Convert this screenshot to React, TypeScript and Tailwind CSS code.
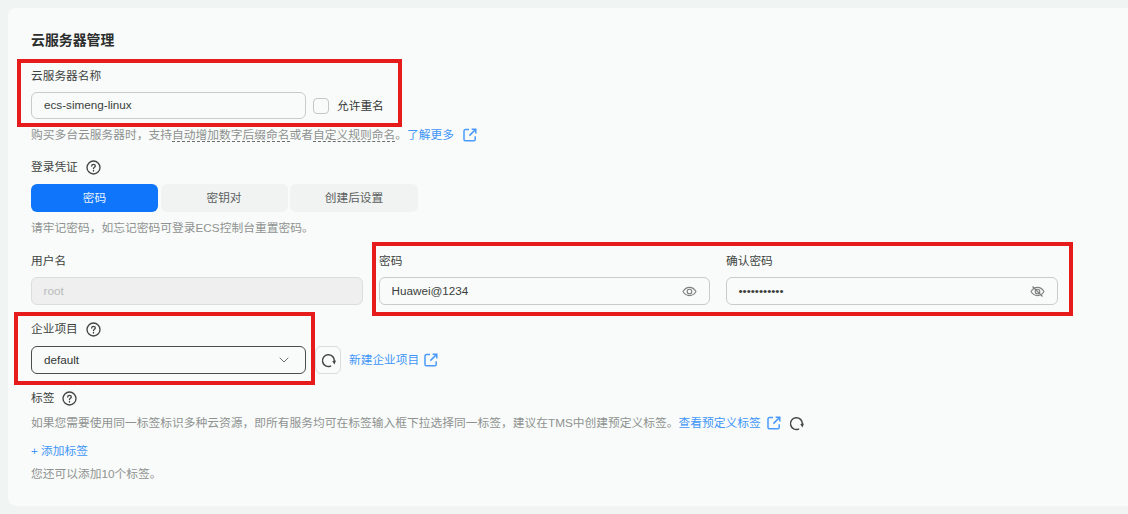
import { ChevronDown } from "lucide-react";

const cjk = "font-['Liberation_Sans','Noto_Sans_CJK_SC',sans-serif]";

function Help() {
  return (
    <svg width={15} height={15} viewBox="0 0 15 15" fill="none" stroke="#434746" strokeWidth={1.35} className="shrink-0">
      <circle cx={7.5} cy={7.5} r={6.5} />
      <path d="M5.7 6c0-1.1.8-1.7 1.8-1.7s1.8.6 1.8 1.6c0 1.3-1.8 1.3-1.8 2.6" strokeLinecap="round" />
      <path d="M7.5 10.4v.7" strokeLinecap="round" />
    </svg>
  );
}

function Refresh() {
  return (
    <svg width={15} height={15} viewBox="0 0 15 15" fill="none" stroke="#454847" strokeWidth={1.5} className="shrink-0">
      <path d="M9.6 13.1A5.9 5.9 0 1 1 13.3 8" strokeLinecap="round" />
      <path d="M15 7.6 11.2 8.2l2.3 3.2z" fill="#454847" stroke="none" />
    </svg>
  );
}

function EyeIcon({ off }: { off?: boolean }) {
  return (
    <svg width={15} height={15} viewBox="0 0 15 15" fill="none" stroke="#7d817f" strokeWidth={1.1} className="shrink-0">
      <path d="M1 7.5C2.6 4.9 4.8 3.4 7.5 3.4S12.4 4.9 14 7.5c-1.6 2.6-3.8 4.1-6.5 4.1S2.6 10.1 1 7.5z" />
      <circle cx={7.5} cy={7.5} r={2.3} />
      {off ? <path d="M2.5 2.5 12.5 12.5" strokeWidth={1.3} /> : null}
    </svg>
  );
}

function Outbound({ className = "" }: { className?: string }) {
  return (
    <svg width={14} height={14} viewBox="0 0 14 14" fill="none" stroke="#4b9afa" strokeWidth={1.5} className={`shrink-0 ${className}`}>
      <path d="M6 1.6H2.4A1.4 1.4 0 0 0 1 3v8.4a1.4 1.4 0 0 0 1.4 1.4h8.4a1.4 1.4 0 0 0 1.4-1.4V8.2" />
      <path d="M6.4 7.6 12.6 1.4M8.6 1.2h4.2v4.2" />
    </svg>
  );
}

function Label({ children, help }: { children: React.ReactNode; help?: boolean }) {
  return (
    <div className="flex h-[18px] items-center gap-2 text-[11.7px] leading-[18px] text-[#3f4342]">
      <span>{children}</span>
      {help ? <Help /> : null}
    </div>
  );
}

function Field({ value, muted, icon, width, className = "h-[28px] pl-[11.5px]" }: { value: string; muted?: boolean; icon?: React.ReactNode; width: string; className?: string }) {
  return (
    <div
      className={`flex items-center justify-between rounded-[6px] border pr-[12px] text-[11.7px] ${className} ${width} ${
        muted ? "border-[#dcdedd] bg-[#efefef] text-[#b9bbba]" : "border-[#c8cbca] text-[#3b3e3d]"
      }`}
    >
      <span>{value}</span>
      {icon}
    </div>
  );
}

function Tab({ label, active, width }: { label: string; active?: boolean; width: string }) {
  return (
    <div
      className={`flex h-[28px] items-center justify-center rounded-[6px] text-[11.7px] ${width} ${
        active ? "bg-[#0f76fb] text-[#e8f1ff]" : "bg-[#f0f3f1] text-[#5c605f]"
      }`}
    >
      {label}
    </div>
  );
}

function Hint({ children, className = "" }: { children: React.ReactNode; className?: string }) {
  return <div className={`h-[18px] text-[11.76px] leading-[18px] text-[#8f9291] ${className}`}>{children}</div>;
}

function DottedTerm({ children }: { children: React.ReactNode }) {
  return <span className="border-b border-dashed border-[#6b6e6d] leading-[13px]">{children}</span>;
}

export default function App() {
  return (
    <div className={`h-[514px] w-[1128px] overflow-hidden bg-[#f0f4f2] pt-2 pl-2 ${cjk}`}>
      <div className="relative h-[498px] rounded-tl-[8px] rounded-bl-[8px] bg-[#f8fbf9] pl-[23px] pt-[22px]">
        <h2 className="h-5 text-[13.9px] font-bold leading-5 text-[#2b2e2d]">云服务器管理</h2>

        <div className="mt-[17px]">
          <Label>云服务器名称</Label>
        </div>
        <div className="mt-[7px] flex items-center">
          <Field value="ecs-simeng-linux" width="w-[275px]" className="h-[27px] pl-3 pb-[2px]" />
          <span className="ml-[7px] h-4 w-4 rounded-[4px] border border-[#c4c7c6]" />
          <span className="ml-2 text-[11.7px] text-[#333635]">允许重名</span>
        </div>
        <Hint className="mt-[7px] flex items-center">
          <span>购买多台云服务器时，支持</span>
          <DottedTerm>自动增加数字后缀命名</DottedTerm>
          <span>或者</span>
          <DottedTerm>自定义规则命名</DottedTerm>
          <span>。</span>
          <span className="text-[#3f95f8]">了解更多</span>
          <Outbound className="ml-[9px]" />
        </Hint>

        <div className="mt-[14px]">
          <Label help>登录凭证</Label>
        </div>
        <div className="mt-2 flex gap-[2.5px]">
          <Tab label="密码" active width="w-[127px]" />
          <Tab label="密钥对" width="w-[127px]" />
          <Tab label="创建后设置" width="w-[128px]" />
        </div>
        <Hint className="mt-[7px]">请牢记密码，如忘记密码可登录ECS控制台重置密码。</Hint>

        <div className="mt-[15px] flex gap-4">
          <div>
            <Label>用户名</Label>
            <div className="mt-[7px]">
              <Field value="root" muted width="w-[332px]" />
            </div>
          </div>
          <div>
            <Label>密码</Label>
            <div className="mt-[7px]">
              <Field value="Huawei@1234" width="w-[331px]" icon={<EyeIcon />} />
            </div>
          </div>
          <div>
            <Label>确认密码</Label>
            <div className="mt-[7px]">
              <Field value="•••••••••••" width="w-[332px]" icon={<EyeIcon off />} />
            </div>
          </div>
        </div>

        <div className="mt-[15px]">
          <Label help>企业项目</Label>
        </div>
        <div className="mt-2 flex items-center">
          <div className="flex h-[28px] w-[275px] items-center justify-between rounded-[6px] border border-[#4a4d4c] pb-[1px] pl-3 pr-[13px] text-[11.7px] text-[#333635]">
            <span>default</span>
            <ChevronDown size={16} strokeWidth={1.3} className="text-[#555958]" />
          </div>
          <div className="ml-[9px] flex h-[28px] w-[26px] items-center justify-center rounded-[6px] border border-[#d9dcdb]">
            <Refresh />
          </div>
          <span className="ml-2 text-[11.7px] text-[#3f95f8]">新建企业项目</span>
          <Outbound className="ml-[5px]" />
        </div>

        <div className="mt-[15px]">
          <Label help>标签</Label>
        </div>
        <Hint className="mt-[7px] flex items-center">
          <span>如果您需要使用同一标签标识多种云资源，即所有服务均可在标签输入框下拉选择同一标签，建议在TMS中创建预定义标签。</span>
          <span className="text-[#3f95f8]">查看预定义标签</span>
          <Outbound className="ml-[6px]" />
          <span className="ml-[8px]"><Refresh /></span>
        </Hint>
        <div className="mt-[10px] h-[18px] text-[11.7px] leading-[18px] text-[#3f95f8]">+ 添加标签</div>
        <Hint className="mt-[5px]">您还可以添加10个标签。</Hint>

        {/* 红色标注框 */}
        <div className="absolute left-[9px] top-[51px] h-[68px] w-[385px] border-4 border-[#e61c1c]" />
        <div className="absolute left-[364px] top-[234px] h-[74px] w-[701px] border-4 border-[#e61c1c]" />
        <div className="absolute left-[6px] top-[304px] h-[73px] w-[301px] border-4 border-[#e61c1c]" />
      </div>
    </div>
  );
}
